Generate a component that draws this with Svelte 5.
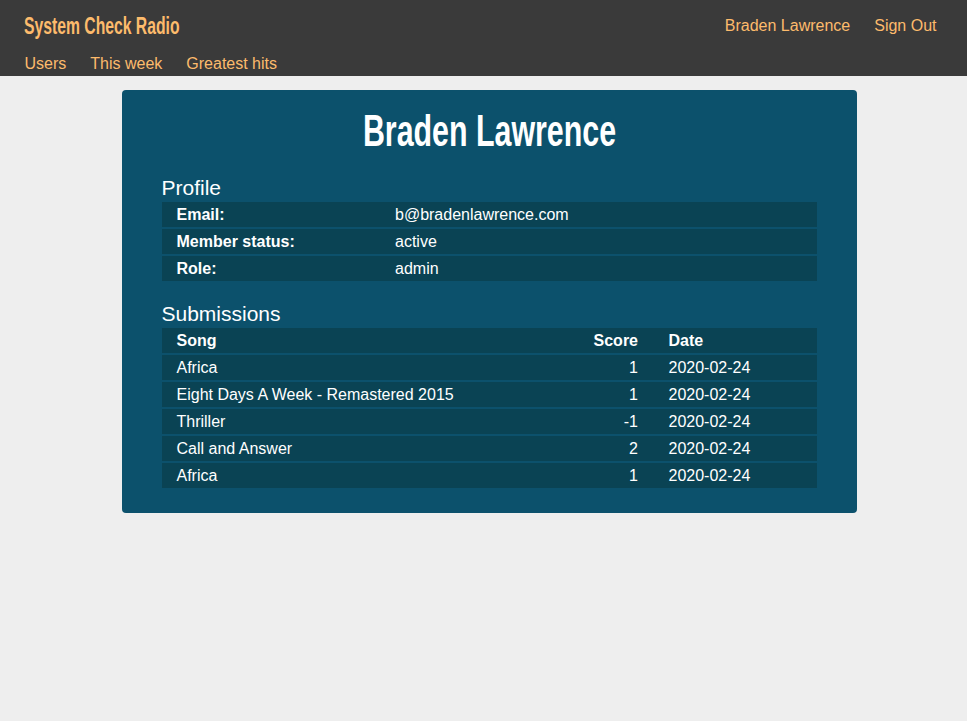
<script>
  const profile = [
    ['Email:', 'b@bradenlawrence.com'],
    ['Member status:', 'active'],
    ['Role:', 'admin']
  ];
  const subs = [
    ['Africa', '1'],
    ['Eight Days A Week - Remastered 2015', '1'],
    ['Thriller', '-1'],
    ['Call and Answer', '2'],
    ['Africa', '1']
  ];
</script>

<header class="top">
  <div class="row1">
    <a class="brand" href="#/">System Check Radio</a>
    <nav class="user">
      <a href="#/">Braden Lawrence</a>
      <a href="#/">Sign Out</a>
    </nav>
  </div>
  <nav class="row2">
    <a href="#/">Users</a>
    <a href="#/">This week</a>
    <a href="#/">Greatest hits</a>
  </nav>
</header>

<main class="card">
  <h1>Braden Lawrence</h1>
  <h2>Profile</h2>
  <div class="table">
    {#each profile as [k, v]}
      <div class="tr prof"><b>{k}</b><span>{v}</span></div>
    {/each}
  </div>
  <h2 class="second">Submissions</h2>
  <div class="table">
    <div class="tr subs"><b>Song</b><b class="num">Score</b><b>Date</b></div>
    {#each subs as [song, score]}
      <div class="tr subs"><span>{song}</span><span class="num">{score}</span><span>2020-02-24</span></div>
    {/each}
  </div>
</main>

<style>
  :global(body) {
    margin: 0;
    background: #eeeeee;
    font-family: "Liberation Sans", Arial, sans-serif;
    font-size: 16px;
    min-height: 721px;
  }
  a { color: #fdbb6c; text-decoration: none; }
  .top {
    background: #3a3a3a;
    height: 76px;
    box-sizing: border-box;
    padding: 0 30.5px 0 24.5px;
  }
  .row1 {
    display: flex;
    justify-content: space-between;
    align-items: center;
    height: 51px;
  }
  .brand {
    font-family: "Liberation Sans Narrow", "Liberation Sans", sans-serif;
    font-weight: 700;
    font-size: 24px;
    margin-left: -0.5px;
    display: inline-block;
    width: 101px;
    white-space: nowrap;
    transform: scaleX(0.655);
    transform-origin: left center;
  }
  .user { display: flex; gap: 24px; }
  .row2 { display: flex; gap: 24px; line-height: 26px; }
  .card {
    width: 735px;
    height: 423px;
    box-sizing: border-box;
    margin: 14px auto 0 122px;
    padding: 16px 40px 0;
    background: #0c516c;
    border-radius: 4px;
    color: #fff;
  }
  h1 {
    margin: 0;
    text-align: center;
    font-family: "Liberation Sans Narrow", "Liberation Sans", sans-serif;
    font-weight: 700;
    font-size: 44px;
    line-height: 50px;
    transform: scaleX(0.69);
  }
  h2 {
    margin: 18px 0 0 -0.5px;
    font-weight: 400;
    font-size: 21px;
    line-height: 28px;
  }
  h2.second { margin-top: 19px; }
  .table { display: flex; flex-direction: column; gap: 2px; }
  .tr {
    display: grid;
    height: 25px;
    line-height: 25px;
    background: #0a4354;
    padding: 0 14.5px;
    box-sizing: border-box;
  }
  .prof { grid-template-columns: 218.5px 1fr; }
  .subs { grid-template-columns: 1fr 90px 134px; }
  .num { text-align: right; padding-right: 30.5px; }
  b { font-weight: 700; }
</style>
